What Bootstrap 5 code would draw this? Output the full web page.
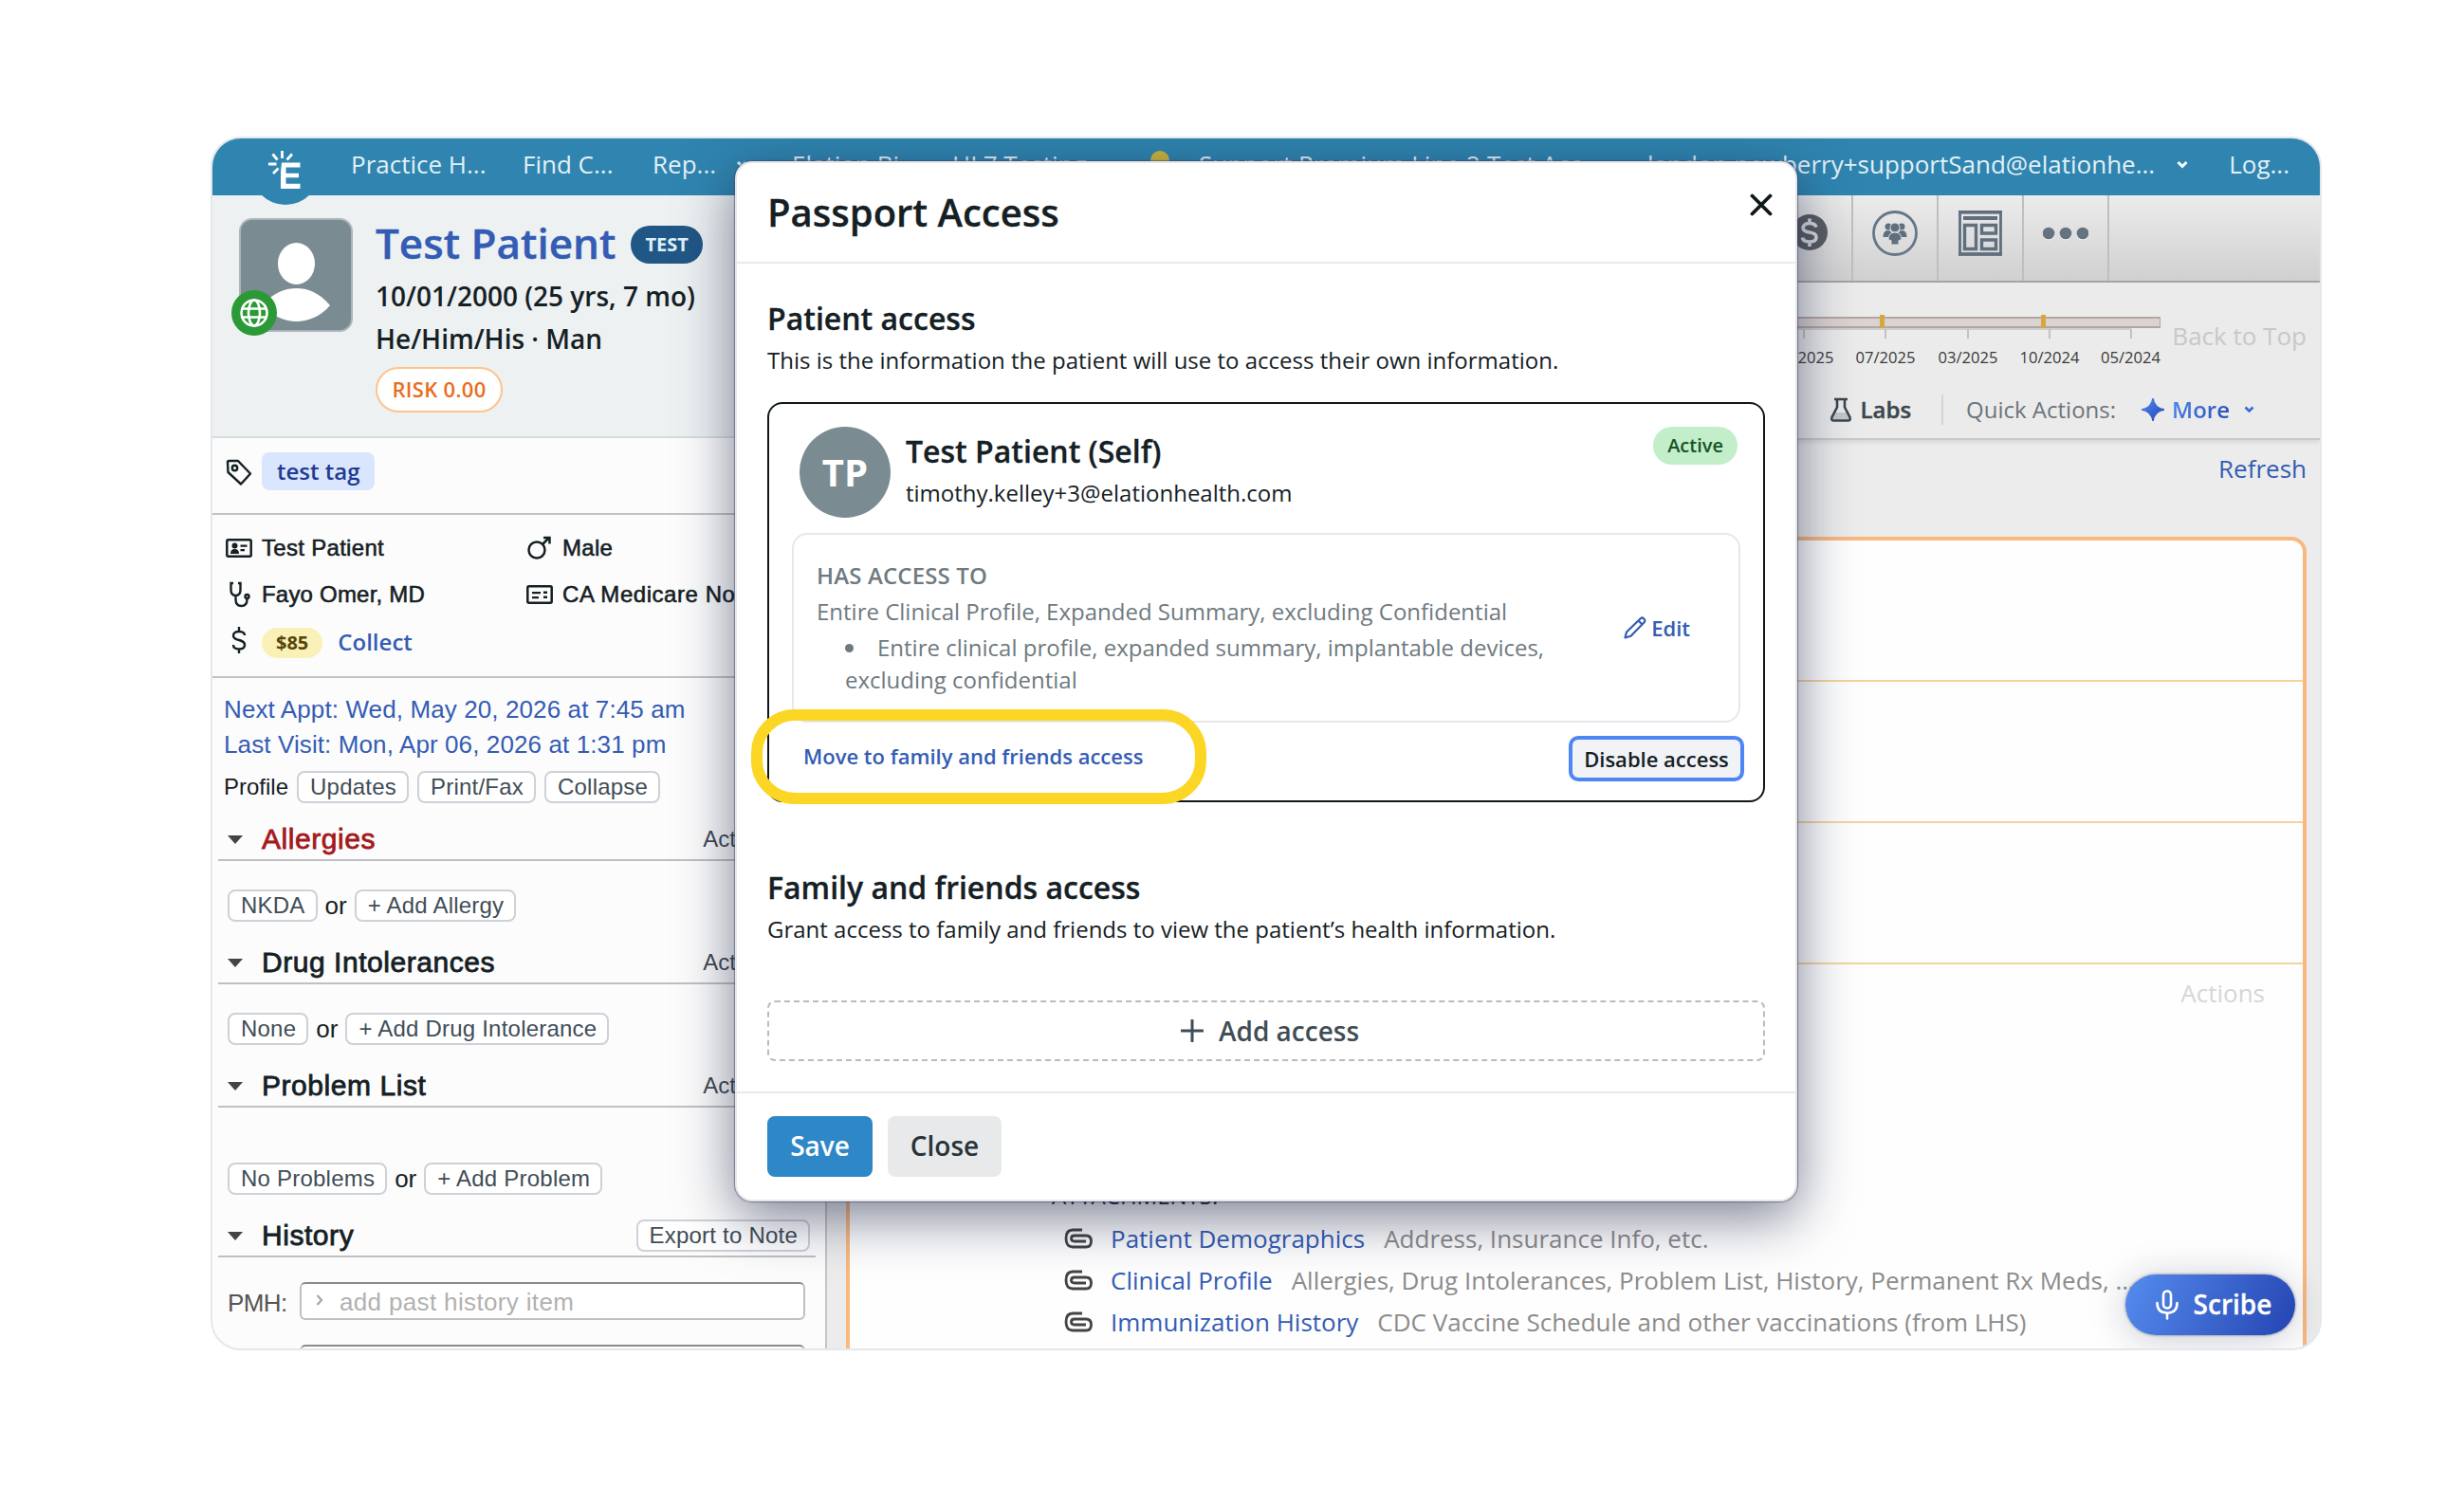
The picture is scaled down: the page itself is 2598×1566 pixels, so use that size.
<!DOCTYPE html>
<html lang="en">

<head>
    <meta charset="utf-8">
    <title>Passport Access</title>
    <link rel="stylesheet" href="https://cdn.jsdelivr.net/npm/bootstrap@5.3.0/dist/css/bootstrap.min.css">
    <style>
        body {
            margin: 0;
            background: #fff;
            font-family: "Open Sans", sans-serif;
            font-size: 24px;
            color: #152024;
            overflow: hidden;
        }

        svg {
            display: block;
            flex: none;
        }

        .app-frame {
            width: 2226px;
            height: 1280px;
            margin: 144px 0 0 222px;
            border: 2px solid #e3e8ec;
            border-radius: 32px;
            overflow: hidden;
            background: #ececec;
        }

        /* top bar */
        .topbar {
            height: 60px;
            padding: 0 32px 5px 146px;
            background: #2f85b0;
            color: #e3f0f6;
            font-size: 26px;
            white-space: nowrap;
        }

        .brand-bump {
            top: -2px;
            left: 41px;
            width: 72px;
            height: 72px;
            z-index: 2;
        }

        /* sidebar */
        .sidebar {
            width: 648px;
            border-right: 2px solid #c2c4c6;
            background: #fcfcfc;
            font-family: "Liberation Sans", sans-serif;
            flex: none;
        }

        .open-sans {
            font-family: "Open Sans", sans-serif;
        }

        .patient-head {
            height: 256px;
            padding: 24px 0 0 28px;
            background: #edf1f2;
            border-bottom: 2px solid #d8dcdf;
            font-weight: 600;
        }

        .photo {
            width: 120px;
            height: 120px;
            border-radius: 14px;
            border: 2px solid #adb4ba;
            background: #7a8c92;
        }

        .web-badge {
            left: -8px;
            top: 76px;
        }

        .patient-name {
            font-size: 44px;
            line-height: 60px;
            color: #345cb4;
            -webkit-text-stroke: .4px currentColor;
        }

        .test-pill {
            height: 40px;
            padding: 0 15px;
            line-height: 39px;
            font-size: 20px;
            font-weight: 700;
            background: #215786;
            color: #dcf1fa;
            margin-top: 4px;
        }

        .vital {
            font-size: 28px;
            line-height: 44px;
        }

        .risk-pill {
            width: 134px;
            height: 48px;
            line-height: 43px;
            margin-top: 8px;
            border: 2px solid #fdc38f;
            background: #fff;
            color: #e96d1c;
            font-size: 22px;
            letter-spacing: .3px;
        }

        .tag-row {
            height: 81px;
            padding: 15px 0 0 14px;
            border-bottom: 2px solid #c2c4c4;
        }

        .tag-chip {
            height: 40px;
            line-height: 39px;
            padding: 0 16px;
            border-radius: 8px;
            background: #d9e6fe;
            color: #1f3a93;
            font-weight: 600;
        }

        .facts {
            height: 172px;
            padding: 10px 0 0 14px;
            border-bottom: 2px solid #c2c4c4;
            white-space: nowrap;
            letter-spacing: .3px;
        }

        .facts .fact-row {
            height: 49px;
        }

        .medium {
            -webkit-text-stroke: .55px currentColor;
        }

        .fact-a {
            width: 317px;
        }

        .fact-icon {
            width: 28px;
            margin-right: 10px;
        }

        .money-pill {
            height: 32px;
            line-height: 31px;
            padding: 0 15px;
            border-radius: 16px;
            background: #faf1b8;
            color: #56450a;
            font-size: 20px;
            font-weight: 700;
            letter-spacing: 0;
        }

        .link-blue {
            color: #345cb4;
        }

        .visits {
            padding: 15px 0 0 12px;
            font-size: 26px;
            line-height: 37px;
            letter-spacing: .11px;
        }

        .btn-mini {
            height: 34px;
            padding: 0 11px 0 12px;
            border: 2px solid #ced1d8;
            border-radius: 8px;
            background: #fff;
            color: #414d57;
            font-family: "Liberation Sans", sans-serif;
            font-size: 24px;
            line-height: 30px;
            letter-spacing: .22px;
            white-space: nowrap;
        }

        .sec-head {
            height: 48px;
            margin: 18px 10px 0 6px;
            padding: 4px 6px 0 10px;
            border-bottom: 2px solid #bfc0c1;
        }

        .sec-head h2 {
            font-size: 30px;
            margin: 0 0 0 20px;
            font-weight: 400;
            letter-spacing: .55px;
            -webkit-text-stroke: .8px currentColor;
        }

        .sec-row {
            margin: 30px 0 0 16px;
            gap: 8px;
            font-size: 26px;
            line-height: 34px;
        }

        .hist-input {
            width: 533px;
            height: 40px;
            border: 2px solid #c0c0c0;
            border-top-color: #8b8b8b;
            border-radius: 6px;
            background: #fff;
            color: #b1b1b1;
            font-size: 26px;
            letter-spacing: .35px;
            padding: 2px 0 0 15px;
        }

        /* main column */
        .toolbar {
            height: 92px;
            padding-right: 222px;
            background: linear-gradient(#ececec, #d0d0d0);
            border-bottom: 2px solid #a6a6a6;
        }

        .tool {
            width: 90px;
            border-right: 2px solid #bdbfc0;
        }

        .chart-head {
            height: 166px;
            border-bottom: 2px solid #c9c9c9;
            box-shadow: 0 2px 5px rgba(0, 0, 0, .1);
            background: #ebebeb;
        }

        .note-card {
            height: 900px;
            margin: 0 14px 0 20px;
            border: 4px solid #fab87f;
            border-radius: 16px;
            background: #fefefe;
        }

        .note-band {
            height: 149px;
            border-bottom: 2px solid #f5d3a1;
        }

        .att-row {
            height: 44px;
            line-height: 44px;
            padding-left: 226px;
            font-size: 26px;
            color: #8c8c8c;
            white-space: nowrap;
        }

        .more-text {
            background: linear-gradient(120deg, #4f86ee, #2748b6);
            -webkit-background-clip: text;
            color: transparent;
            font-weight: 600;
        }

        .btn-scribe {
            right: 26px;
            bottom: 14px;
            width: 179px;
            height: 64px;
            padding: 0 0 0 7px;
            border-radius: 32px;
            background: linear-gradient(115deg, #568cee, #2444b2);
            box-shadow: 0 4px 40px rgba(20, 26, 60, .22), 0 0 3px rgba(20, 26, 60, .5);
            color: #fff;
            font-size: 28px;
            font-weight: 600;
            -webkit-text-stroke: .3px currentColor;
        }

        /* dialog */
        .passport {
            left: 551px;
            top: 24px;
            width: 1120px;
            border: 2px solid #e6e7ea;
            border-radius: 18px;
            background: #fff;
            box-shadow: 0 0 1px 1px rgba(60, 66, 95, .55), 0 16px 58px rgba(20, 26, 62, .56);
            z-index: 5;
        }

        .passport-head {
            height: 106px;
            padding: 0 24px 0 32px;
            border-bottom: 2px solid #e8eaec;
        }

        .passport-head h1 {
            font-size: 40px;
            font-weight: 600;
            margin: 0;
        }

        .passport h1,
        .passport h3 {
            -webkit-text-stroke: .3px currentColor;
        }

        .passport-body {
            padding: 36px 32px 32px;
        }

        .passport h3 {
            font-size: 32px;
            line-height: 44px;
            font-weight: 600;
            margin: 0;
        }

        .passport p {
            line-height: 40px;
            margin: 2px 0 0;
        }

        .access-card {
            height: 422px;
            margin-top: 24px;
            border: 2px solid #10171a;
            border-radius: 16px;
        }

        .initials {
            width: 96px;
            height: 96px;
            background: #7a8c92;
            color: #fff;
            font-size: 40px;
            font-weight: 700;
        }

        .active-pill {
            height: 40px;
            line-height: 40px;
            padding: 0 15px;
            border-radius: 20px;
            background: #c2eec9;
            color: #195425;
            font-size: 20px;
            font-weight: 600;
        }

        .scope-box {
            height: 200px;
            margin: 16px 24px 0;
            padding: 24px 51px 0 24px;
            border: 2px solid #e6e7e9;
            border-radius: 16px;
            color: #6f7a80;
            line-height: 38px;
        }

        .scope-box ul {
            margin: 2px 0 0;
            padding-left: 30px;
            list-style: none;
            line-height: 34px;
        }

        .scope-box li::before {
            content: "";
            display: inline-block;
            width: 9px;
            height: 9px;
            margin: 0 25px 4px 0;
            border-radius: 50%;
            background: #6f7a80;
        }

        .scope-edit {
            width: 71px;
            margin-left: 10px;
            font-size: 22px;
            font-weight: 600;
        }

        .card-actions {
            margin: 14px 20px 0 36px;
            font-size: 22px;
            font-weight: 600;
        }

        .btn-disable {
            width: 185px;
            height: 48px;
            padding: 0;
            border: 4px solid #4f86f5;
            border-radius: 10px;
            background: #f1f3f6;
            color: #152024;
            font-size: 22px;
            font-weight: 600;
            line-height: 36px;
        }

        .callout-ring {
            left: 15px;
            top: 576px;
            width: 480px;
            height: 100px;
            border: 12px solid #fcd624;
            border-radius: 46px;
        }

        .btn-add {
            height: 64px;
            margin-top: 55px;
            padding: 0 0 1px 8px;
            border: 2px dashed #b3bec4;
            border-radius: 8px;
            color: #414d55;
            font-size: 28px;
            font-weight: 600;
        }

        .passport-foot {
            padding: 24px 32px;
            border-top: 2px solid #e8e9eb;
        }

        .btn-foot {
            height: 64px;
            padding: 0 0 2px;
            border: 0;
            border-radius: 8px;
            font-size: 28px;
            font-weight: 600;
        }
    </style>
</head>

<body>
    <div class="app-frame position-relative">

        <!-- Top bar -->
        <div class="topbar d-flex align-items-center">
            <span style="width:181px">Practice H...</span>
            <span style="width:137px">Find C...</span>
            <span style="width:88px">Rep...</span>
            <svg width="12" height="9" viewBox="0 0 12 9"><path d="M2 2l4 4 4-4" fill="none" stroke="#e3f0f6" stroke-width="3"/></svg>
            <span style="width:169px;margin-left:47px">Elation Bi...</span>
            <span style="width:209px">HL7 Testing</span>
            <svg width="20" height="26" viewBox="0 0 20 26" style="margin:-4px 31px 0 0"><circle cx="10" cy="10" r="10" fill="#cdb83c"/><rect x="6" y="19" width="8" height="6" fill="#cdb83c"/></svg>
            <span style="letter-spacing:.1px">Support Premium Line 2 Test Acc...</span>
            <span class="ms-auto">landon.newberry+supportSand@elationhe...</span>
            <svg width="12" height="9" viewBox="0 0 12 9" style="margin:0 43px 0 23px"><path d="M1.500 2l4.500 4.500L10.500 2" fill="none" stroke="#fff" stroke-width="3"/></svg>
            <span>Log...</span>
        </div>

        <svg class="brand-bump position-absolute" viewBox="0 0 72 72">
            <circle cx="36" cy="36" r="36" fill="#2f85b0"/>
            <path d="M32 27.500h19.500v5H36.500v6.200H50v4.600H36.500v6.400h15v5.300H31V37z" fill="#fff"/>
            <path d="M32.500 15v8M43 18.500l-5.500 6M22.500 18.500l5 6M18 29h8.500M23 39l5.500-5.500" fill="none" stroke="#fff" stroke-width="2.800"/>
        </svg>

        <div class="d-flex">
            <!-- Sidebar -->
            <div class="sidebar">
                <div class="patient-head d-flex open-sans">
                    <div class="position-relative">
                        <div class="photo">
                            <svg width="116" height="116" viewBox="0 0 116 116">
                                <ellipse cx="58.500" cy="46" rx="19.500" ry="22" fill="#fff"/>
                                <path d="M94 90C82 76 70 72 58.500 72S35 76 22 90c12 12 25 17 36.500 17S84 102 94 90z" fill="#fff"/>
                            </svg>
                        </div>
                        <svg class="web-badge position-absolute" width="48" height="48" viewBox="0 0 48 48">
                            <circle cx="24" cy="24" r="24" fill="#2b9a36"/>
                            <g fill="none" stroke="#fff" stroke-width="2.600">
                                <circle cx="24" cy="24" r="13.500"/>
                                <ellipse cx="24" cy="24" rx="6" ry="13.500"/>
                                <path d="M11 19.500h26M11 28.500h26"/>
                            </g>
                        </svg>
                    </div>
                    <div style="margin:-4px 0 0 24px">
                        <div class="d-flex align-items-center">
                            <div class="patient-name">Test Patient</div>
                            <span class="test-pill rounded-pill" style="margin-left:16px">TEST</span>
                        </div>
                        <div class="vital" style="margin-top:4px">10/01/2000 (25 yrs, 7 mo)</div>
                        <div class="vital" style="margin-top:1px">He/Him/His · Man</div>
                        <div class="risk-pill rounded-pill text-center">RISK 0.00</div>
                    </div>
                </div>

                <div class="tag-row d-flex">
                    <div class="fact-icon" style="margin-top:7px">
                        <svg width="28" height="28" viewBox="0 0 28 28" fill="none" stroke="#152024" stroke-width="2.400" stroke-linejoin="round">
                            <path d="M2 3.500Q2 2 3.500 2H13l13 13.500L16 26.500 2.500 14z"/>
                            <circle cx="9.500" cy="9.500" r="2.700"/>
                        </svg>
                    </div>
                    <span class="tag-chip open-sans">test tag</span>
                </div>

                <div class="facts">
                    <div class="fact-row d-flex align-items-center medium">
                        <div class="fact-a d-flex align-items-center">
                            <div class="fact-icon">
                                <svg width="28" height="20" viewBox="0 0 28 20"><rect x="1.300" y="1.300" width="25.400" height="17.400" rx="1.500" fill="none" stroke="#152024" stroke-width="2.500"/><circle cx="9.500" cy="7.500" r="3" fill="#152024"/><path d="M5 16q0-5 4.500-5t4.500 5zM15.500 6.500h7v2.200h-7zM15.500 11h4.500v2.200h-4.500z" fill="#152024"/></svg>
                            </div>
                            Test Patient
                        </div>
                        <div class="fact-icon">
                            <svg width="28" height="26" viewBox="0 0 28 26" fill="none" stroke="#152024" stroke-width="2.500"><circle cx="11" cy="15" r="8.500"/><path d="M17 9l7-7M18 2h6.500v6.500"/></svg>
                        </div>
                        Male
                    </div>
                    <div class="fact-row d-flex align-items-center medium">
                        <div class="fact-a d-flex align-items-center" style="letter-spacing:.2px">
                            <div class="fact-icon">
                                <svg width="28" height="28" viewBox="0 0 28 28" fill="none" stroke="#152024" stroke-width="2.400"><path d="M8 2H5.500v7q0 6 5 6t5-6V2H13M10.500 15v4q0 7 6 7t6-7v-1"/><circle cx="22.500" cy="16" r="2"/></svg>
                            </div>
                            Fayo Omer, MD
                        </div>
                        <div class="fact-icon">
                            <svg width="28" height="20" viewBox="0 0 28 20"><rect x="1.300" y="1.300" width="25.400" height="17.400" rx="1.500" fill="none" stroke="#152024" stroke-width="2.500"/><path d="M6 7h9v2.200H6zM6 12h7v2.200H6zM18 6.500h4V9h-4zM18 11.500h4V14h-4z" fill="#152024"/></svg>
                        </div>
                        <span style="letter-spacing:.55px">CA Medicare North</span>
                    </div>
                    <div class="d-flex align-items-center open-sans" style="height:54px">
                        <div class="fact-icon" style="margin-top:-7px">
                            <svg width="28" height="28" viewBox="0 0 28 28" fill="none" stroke="#152024" stroke-width="2.400"><path d="M20 9q0-4-6-4t-6 4.500q0 3 6 4.500t6 5q0 4.500-6 4.500t-6-4.500M14 0v5M14 23v5"/></svg>
                        </div>
                        <span class="money-pill">$85</span>
                        <span class="link-blue" style="font-weight:600;margin:-3px 0 0 16px;letter-spacing:0">Collect</span>
                    </div>
                </div>

                <div class="visits link-blue">
                    <div>Next Appt: Wed, May 20, 2026 at 7:45 am</div>
                    <div>Last Visit: Mon, Apr 06, 2026 at 1:31 pm</div>
                </div>

                <div class="d-flex align-items-center" style="height:34px;margin:9px 0 -5px 12px;gap:9px">
                    <span>Profile</span>
                    <button type="button" class="btn-mini">Updates</button>
                    <button type="button" class="btn-mini">Print/Fax</button>
                    <button type="button" class="btn-mini">Collapse</button>
                </div>

                <div class="sec-head d-flex align-items-center">
                    <svg width="16" height="9" viewBox="0 0 16 9"><path d="M0 0h16L8 9z" fill="#444"/></svg>
                    <h2 style="color:#a4191d">Allergies</h2>
                    <span class="ms-auto" style="margin-right:34px;color:#3f4a54">Actions</span>
                </div>
                <div class="sec-row d-flex">
                    <button type="button" class="btn-mini">NKDA</button>or<button type="button" class="btn-mini">+ Add Allergy</button>
                </div>

                <div class="sec-head d-flex align-items-center">
                    <svg width="16" height="9" viewBox="0 0 16 9"><path d="M0 0h16L8 9z" fill="#444"/></svg>
                    <h2>Drug Intolerances</h2>
                    <span class="ms-auto" style="margin-right:34px;color:#3f4a54">Actions</span>
                </div>
                <div class="sec-row d-flex">
                    <button type="button" class="btn-mini">None</button>or<button type="button" class="btn-mini">+ Add Drug Intolerance</button>
                </div>

                <div class="sec-head d-flex align-items-center">
                    <svg width="16" height="9" viewBox="0 0 16 9"><path d="M0 0h16L8 9z" fill="#444"/></svg>
                    <h2>Problem List</h2>
                    <span class="ms-auto" style="margin-right:34px;color:#3f4a54">Actions</span>
                </div>
                <div class="sec-row d-flex" style="margin-top:58px">
                    <button type="button" class="btn-mini">No Problems</button>or<button type="button" class="btn-mini">+ Add Problem</button>
                </div>

                <div class="sec-head d-flex align-items-center">
                    <svg width="16" height="9" viewBox="0 0 16 9"><path d="M0 0h16L8 9z" fill="#444"/></svg>
                    <h2>History</h2>
                    <button type="button" class="btn-mini ms-auto">Export to Note</button>
                </div>
                <div class="d-flex justify-content-between align-items-center" style="height:40px;margin:26px 21px 0 16px">
                    <span style="color:#555;font-size:26px;letter-spacing:-.6px;padding-top:4px">PMH:</span>
                    <div class="hist-input d-flex align-items-center">
                        <svg width="8" height="12" viewBox="0 0 8 12" style="margin:-4px 17px 0 0"><path d="M1.500 1l4.500 5-4.500 5" fill="none" stroke="#aaa" stroke-width="2.400"/></svg>
                        add past history item
                    </div>
                </div>
                <div class="d-flex justify-content-end" style="margin:26px 21px 0 0">
                    <div class="hist-input"></div>
                </div>
            </div>

            <!-- Chart column -->
            <div class="flex-grow-1">
                <div class="toolbar d-flex justify-content-end">
                    <div class="tool d-flex justify-content-center" style="padding-top:20px">
                        <svg width="38" height="38" viewBox="0 0 38 38"><circle cx="19" cy="19" r="19" fill="#5a5e64"/><path d="M26 13.500q-1-4-7-4t-7 4.500q0 4 7 5t7 5q0 5-7 5t-7.500-4.500M19 4.500v5M19 29v5" fill="none" stroke="#dcdde0" stroke-width="3.600"/></svg>
                    </div>
                    <div class="tool d-flex justify-content-center" style="padding-top:16px">
                        <svg width="48" height="48" viewBox="0 0 48 48">
                            <circle cx="24" cy="24" r="22.500" fill="none" stroke="#657687" stroke-width="2.800"/>
                            <g fill="#5f6f7e"><circle cx="17" cy="17" r="3.500"/><circle cx="31" cy="17" r="3.500"/><path d="M11.500 28q0-7 5-7t4 7zM27.500 28q-1-7 4-7t5 7z"/><circle cx="24" cy="18" r="5" stroke="#dedede" stroke-width="1"/><path d="M17 31q0-8 7-8t7 8l-3 .5V36h-8v-4.500z" stroke="#dedede" stroke-width="1"/></g>
                        </svg>
                    </div>
                    <div class="tool d-flex justify-content-center" style="padding-top:16px">
                        <svg width="46" height="48" viewBox="0 0 46 48" fill="none" stroke="#5f6f7e">
                            <path d="M1.500 2v44h43V2z" stroke-width="2.800"/><path d="M0 1.500h46M0 46h46" stroke-width="3.500"/><path d="M5 8h36" stroke-width="4"/>
                            <path d="M6.500 15.500h12v25h-12zM24.500 15.500h15v8.500h-15zM24.500 31h15v9.500h-15z" stroke-width="3.400"/>
                        </svg>
                    </div>
                    <div class="tool d-flex justify-content-center" style="padding-top:33px">
                        <svg width="48" height="15" viewBox="0 0 48 15"><g fill="#fff" opacity=".7"><circle cx="6" cy="8.500" r="6"/><circle cx="24" cy="8.500" r="6"/><circle cx="42" cy="8.500" r="6"/></g><g fill="#64737f"><circle cx="6" cy="7" r="6.300"/><circle cx="24" cy="7" r="6.300"/><circle cx="42" cy="7" r="6.300"/></g></svg>
                    </div>
                </div>

                <div class="chart-head">
                    <div class="d-flex justify-content-end" style="height:104px;padding-right:14px">
                        <svg width="460" height="72" viewBox="0 0 460 72" style="margin-top:32px">
                            <rect x="-2" y="5" width="462" height="10" fill="#dbd3d1" stroke="#b5a5a1" stroke-width="2"/>
                            <path d="M0 17h429" stroke="#cfcfcf" stroke-width="2"/>
                            <path d="M84 17v10M170 17v10M257 17v10M343 17v10M429 17v10" stroke="#c2c2c2" stroke-width="2"/>
                            <path d="M166.500 2v14M336.500 2v14" stroke="#d4a83d" stroke-width="5"/>
                            <g font-size="16.600" fill="#3a3a3a" text-anchor="middle">
                                <text x="84" y="53">11/2025</text>
                                <text x="170" y="53">07/2025</text>
                                <text x="257" y="53">03/2025</text>
                                <text x="343" y="53">10/2024</text>
                                <text x="428.500" y="53">05/2024</text>
                            </g>
                        </svg>
                        <span style="font-size:26px;color:#c8c8c8;margin:37px 0 0 12px">Back to Top</span>
                    </div>
                    <div class="d-flex justify-content-end align-items-center" style="height:60px;padding-right:69px">
                        <svg width="24" height="26" viewBox="0 0 24 26"><path d="M6 16h12l3 6v1.500H3V22z" fill="#c3c6c9"/><path d="M5 2h14M8 2v8.500L2.500 21q-1 3.500 2 3.500h15q3 0 2-3.500L16 10.500V2" fill="none" stroke="#3b474e" stroke-width="2.600"/></svg>
                        <span style="font-weight:600;color:#3b474e;margin-left:8px;-webkit-text-stroke:.4px">Labs</span>
                        <span style="width:2px;height:32px;background:#d5d5d5;margin:0 24px 0 32px"></span>
                        <span style="color:#6b757c;margin-right:27px">Quick Actions:</span>
                        <svg width="24" height="24" viewBox="0 0 24 24"><defs><linearGradient id="spark" x1="0" y1="0" x2="1" y2="1"><stop stop-color="#4f8cf2"/><stop offset="1" stop-color="#2444b2"/></linearGradient></defs><path d="M12 0q1.500 10.500 12 12-10.500 1.500-12 12Q10.500 13.500 0 12 10.500 10.500 12 0z" fill="url(#spark)" stroke="url(#spark)" stroke-width="1.500"/></svg>
                        <span class="more-text" style="margin:0 15px 0 8px">More</span>
                        <svg width="11" height="8" viewBox="0 0 11 8"><path d="M1.500 1.500l4 4 4-4" fill="none" stroke="#3c68d4" stroke-width="2.600"/></svg>
                    </div>
                </div>

                <div class="text-end" style="height:102px;padding:11px 14px 0 0;font-size:26px">
                    <span class="link-blue">Refresh</span>
                </div>

                <div class="note-card">
                    <div class="note-band"></div>
                    <div class="note-band"></div>
                    <div class="note-band"></div>
                    <div class="text-end" style="line-height:60px;padding-right:40px;font-size:26px;color:#d6d6d6">Actions</div>
                    <div style="margin:162px 0 1px 213px;line-height:44px;color:#22252c">ATTACHMENTS:</div>
                    <div class="att-row d-flex align-items-center">
                        <svg width="30" height="22" viewBox="0 0 30 22"><path d="M19 2H9Q2 2 2 11t7 9h14q5.500 0 5.500-6t-5.500-6H11q-3.500 0-3.500 3t3.500 3h12" fill="none" stroke="#444" stroke-width="2.800"/></svg>
                        <span class="link-blue" style="margin:0 20px 0 19px">Patient Demographics</span>Address, Insurance Info, etc.
                    </div>
                    <div class="att-row d-flex align-items-center">
                        <svg width="30" height="22" viewBox="0 0 30 22"><path d="M19 2H9Q2 2 2 11t7 9h14q5.500 0 5.500-6t-5.500-6H11q-3.500 0-3.500 3t3.500 3h12" fill="none" stroke="#444" stroke-width="2.800"/></svg>
                        <span class="link-blue" style="margin:0 20px 0 19px">Clinical Profile</span>Allergies, Drug Intolerances, Problem List, History, Permanent Rx Meds, ...
                    </div>
                    <div class="att-row d-flex align-items-center">
                        <svg width="30" height="22" viewBox="0 0 30 22"><path d="M19 2H9Q2 2 2 11t7 9h14q5.500 0 5.500-6t-5.500-6H11q-3.500 0-3.500 3t3.500 3h12" fill="none" stroke="#444" stroke-width="2.800"/></svg>
                        <span class="link-blue" style="margin:0 20px 0 19px">Immunization History</span>CDC Vaccine Schedule and other vaccinations (from LHS)
                    </div>
                </div>
            </div>
        </div>

        <button type="button" class="btn btn-scribe position-absolute d-flex align-items-center justify-content-center border-0">
            <svg width="24" height="32" viewBox="0 0 24 32" fill="none" stroke="#fff" stroke-width="2.600" stroke-linecap="round"><rect x="8" y="1.500" width="8" height="18" rx="4"/><path d="M1.500 14q0 10.500 10.500 10.500T22.500 14M12 25v5.500"/></svg>
            <span style="margin:-2px 0 0 16px">Scribe</span>
        </button>

        <!-- Passport dialog -->
        <div class="passport position-absolute">
            <div class="passport-head d-flex align-items-center justify-content-between">
                <h1>Passport Access</h1>
                <svg width="24" height="24" viewBox="0 0 24 24" style="margin-top:-17px"><path d="M2.500 2.500l19 19M21.500 2.500l-19 19" stroke="#10181b" stroke-width="3.800" stroke-linecap="round"/></svg>
            </div>

            <div class="passport-body">
                <h3>Patient access</h3>
                <p>This is the information the patient will use to access their own information.</p>

                <div class="access-card">
                    <div class="d-flex align-items-start" style="padding:24px 27px 0 32px">
                        <div class="initials rounded-circle d-flex align-items-center justify-content-center">TP</div>
                        <div style="margin:4px auto -2px 16px">
                            <h3>Test Patient (Self)</h3>
                            <p>timothy.kelley+3@elationhealth.com</p>
                        </div>
                        <span class="active-pill">Active</span>
                    </div>
                    <div class="scope-box d-flex">
                        <div class="flex-grow-1">
                            <div style="font-weight:600;letter-spacing:.15px">HAS ACCESS TO</div>
                            <div>Entire Clinical Profile, Expanded Summary, excluding Confidential</div>
                            <ul>
                                <li>Entire clinical profile, expanded summary, implantable devices, excluding confidential</li>
                            </ul>
                        </div>
                        <div class="scope-edit link-blue d-flex align-items-center align-self-start" style="height:147px">
                            <svg width="24" height="24" viewBox="0 0 24 24" fill="none" stroke="#345cb4" stroke-width="2.200" stroke-linejoin="round"><path d="M1.500 22.500l1.500-6L18 2q1.500-1.200 3.300.5t.6 3.500L7.500 20.800zM15.500 4.500l4 4"/></svg>
                            <span style="margin-left:5px">Edit</span>
                        </div>
                    </div>
                    <div class="card-actions d-flex align-items-center justify-content-between">
                        <span class="link-blue" style="margin-top:-5px">Move to family and friends access</span>
                        <button type="button" class="btn btn-disable">Disable access</button>
                    </div>
                </div>

                <h3 style="margin-top:68px">Family and friends access</h3>
                <p>Grant access to family and friends to view the patient’s health information.</p>
                <div class="btn-add d-flex align-items-center justify-content-center">
                    <svg width="24" height="24" viewBox="0 0 24 24"><path d="M12 1v22M1 12h22" stroke="#414d55" stroke-width="3" stroke-linecap="round"/></svg>
                    <span style="margin-left:16px">Add access</span>
                </div>
            </div>

            <div class="passport-foot d-flex">
                <button type="button" class="btn btn-foot text-white" style="width:111px;margin-right:16px;background:#2e87c6">Save</button>
                <button type="button" class="btn btn-foot" style="width:120px;background:#e8e9eb;color:#28343a">Close</button>
            </div>

            <div class="callout-ring position-absolute"></div>
        </div>
    </div>
    <script src="https://cdn.jsdelivr.net/npm/bootstrap@5.3.0/dist/js/bootstrap.bundle.min.js"></script>
</body>

</html>
